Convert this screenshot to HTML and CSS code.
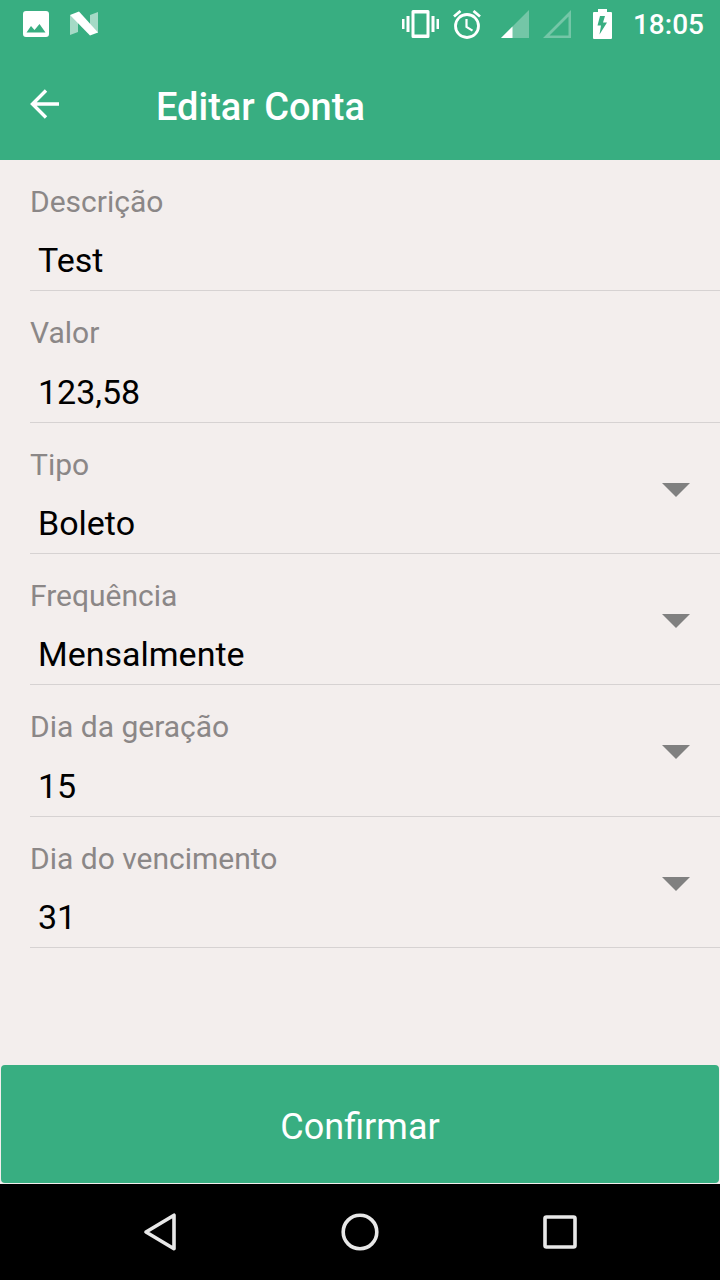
FILE: index.html
```html
<!DOCTYPE html>
<html lang="pt-BR">
<head>
<meta charset="utf-8">
<meta name="viewport" content="width=device-width, initial-scale=1">
<title>Editar Conta</title>
<link rel="stylesheet" href="styles.css">
</head>
<body>
<div class="screen">
  <div class="status-bar">
    <div class="status-group">
      <svg width="26" height="26" viewBox="0 0 26 26" aria-hidden="true"><path fill="#fff" fill-rule="evenodd" d="M3 0h20q3 0 3 3v20q0 3-3 3H3q-3 0-3-3V3Q0 0 3 0zM3.500 21.500h19l-6-8.500-5 6-3.500-4z"/></svg>
      <svg width="28" height="26" viewBox="0 0 28 26" aria-hidden="true"><path fill="#fff" fill-opacity=".55" d="M0 4v20l8-3V8zM28 1v21l-8-5V4z"/><path fill="#fff" d="M0 4l9-3.500L28 21.500l-8 3z"/></svg>
    </div>
    <div class="status-group status-right">
      <svg width="37" height="28" viewBox="0 0 37 28" aria-hidden="true"><path fill="#fff" fill-rule="evenodd" d="M0 9h2.500v10H0zM4.500 6h3v16h-3zM29.500 6h3v16h-3zM34.500 9H37v10h-2.500zM11 0h15q1.500 0 1.500 1.500v25Q27.500 28 26 28H11q-1.500 0-1.500-1.500v-25Q9.500 0 11 0zM12.500 3.500v21h12v-21z"/></svg>
      <svg width="28" height="29" viewBox="0 0 28 29" fill="none" stroke="#fff" aria-hidden="true"><circle cx="14" cy="16" r="11.500" stroke-width="2.800"/><path stroke-width="2.800" d="M1 6.500l6.500-5.500M27 6.500L20.500 1"/><path stroke-width="2.200" d="M13.500 9v8l6 3.600"/></svg>
      <svg class="signal" width="28" height="28" viewBox="0 0 28 28" aria-hidden="true"><path fill="#fff" fill-opacity=".3" d="M28 0v28H0z"/><path fill="#fff" d="M11.500 16.500V28H0z"/></svg>
      <svg width="28" height="28" viewBox="0 0 28 28" aria-hidden="true"><path fill="#fff" fill-opacity=".3" fill-rule="evenodd" d="M28 0v28H0zM25.500 6.500l-19 19h19z"/></svg>
      <svg class="battery" width="19" height="30" viewBox="0 0 19 30" aria-hidden="true"><path fill="#fff" fill-rule="evenodd" d="M5 0h9v3h4q1 0 1 1v25q0 1-1 1H1q-1 0-1-1V4q0-1 1-1h4zM12 7H7L4.500 16.500H8L6.500 25.500 14 13.500h-4z"/></svg>
      <span class="clock">18:05</span>
    </div>
  </div>
  <header class="app-bar">
    <button class="back" type="button" aria-label="Voltar"><svg width="30" height="30" viewBox="0 0 30 30" fill="none" stroke="#fff" stroke-width="3.400" aria-hidden="true"><path d="M29 15H3M16 1.500L2.500 15 16 28.500"/></svg></button>
    <h1 class="title">Editar Conta</h1>
  </header>
  <form class="content">
    <div class="fields">
      <div class="field"><label class="label" for="descricao">Descrição</label><input class="value" id="descricao" type="text" value="Test"></div>
      <div class="field"><label class="label" for="valor">Valor</label><input class="value" id="valor" type="text" value="123,58"></div>
      <div class="field"><label class="label" for="tipo">Tipo</label><select class="value" id="tipo"><option>Boleto</option></select><svg class="arrow" width="28" height="14" viewBox="0 0 28 14" aria-hidden="true"><path fill="#808080" d="M0 0h28L14 14z"/></svg></div>
      <div class="field"><label class="label" for="frequencia">Frequência</label><select class="value" id="frequencia"><option>Mensalmente</option></select><svg class="arrow" width="28" height="14" viewBox="0 0 28 14" aria-hidden="true"><path fill="#808080" d="M0 0h28L14 14z"/></svg></div>
      <div class="field"><label class="label" for="geracao">Dia da geração</label><select class="value" id="geracao"><option>15</option></select><svg class="arrow" width="28" height="14" viewBox="0 0 28 14" aria-hidden="true"><path fill="#808080" d="M0 0h28L14 14z"/></svg></div>
      <div class="field"><label class="label" for="vencimento">Dia do vencimento</label><select class="value" id="vencimento"><option>31</option></select><svg class="arrow" width="28" height="14" viewBox="0 0 28 14" aria-hidden="true"><path fill="#808080" d="M0 0h28L14 14z"/></svg></div>
    </div>
    <button class="confirm" type="submit">Confirmar</button>
  </form>
  <nav class="nav-bar">
    <button class="nav-button" type="button" aria-label="Voltar"><svg width="40" height="40" viewBox="0 0 40 40" fill="none" stroke="#e8e8e8" stroke-width="3.600" stroke-linejoin="round" aria-hidden="true"><path d="M34 3.200v33.600L6 20z"/></svg></button>
    <button class="nav-button" type="button" aria-label="Início"><svg width="40" height="40" viewBox="0 0 40 40" fill="none" stroke="#e8e8e8" stroke-width="3.600" aria-hidden="true"><circle cx="20" cy="20" r="16.800"/></svg></button>
    <button class="nav-button" type="button" aria-label="Recentes"><svg width="40" height="40" viewBox="0 0 40 40" fill="none" stroke="#e8e8e8" stroke-width="3.600" aria-hidden="true"><rect x="5" y="5" width="30" height="30" rx="1.500"/></svg></button>
  </nav>
</div>
</body>
</html>
```
FILE: styles.css
```css
* {
  box-sizing: border-box;
}

body {
  margin: 0;
  background: #f3eeed;
  font-family: Roboto, "Liberation Sans", sans-serif;
}

svg {
  display: block;
  flex: none;
}

button,
input,
select {
  margin: 0;
  padding: 0;
  border: 0;
  border-radius: 0;
  background: none;
  font-family: inherit;
  appearance: none;
}

.screen {
  display: flex;
  flex-direction: column;
  min-height: 100vh;
}

.status-bar {
  display: flex;
  align-items: center;
  justify-content: space-between;
  height: 48px;
  padding: 0 16px 0 23px;
  background: #38ae81;
}

.status-group {
  display: flex;
  align-items: center;
  gap: 21px;
}

.status-right {
  gap: 14px;
}

.signal {
  margin-left: 6px;
}

.battery {
  margin: 0 7px 0 8px;
}

.clock {
  padding-top: 2px;
  color: #fff;
  font-size: 28px;
  font-weight: 500;
  line-height: 32px;
}

.app-bar {
  display: flex;
  align-items: center;
  gap: 96px;
  height: 112px;
  padding: 0 30px;
  background: #38ae81;
}

.title {
  margin: 0;
  padding-top: 6px;
  color: #fff;
  font-size: 38px;
  font-weight: 500;
  line-height: 48px;
}

.content {
  display: flex;
  flex: 1;
  flex-direction: column;
  justify-content: space-between;
}

.fields {
  display: grid;
  grid-auto-rows: 1fr;
  min-height: 788px;
  padding-left: 30px;
}

.field {
  position: relative;
  display: flex;
  flex-direction: column;
  justify-content: space-between;
  padding: 22px 0 10px;
  border-bottom: 1px solid #d6d2d2;
}

.label {
  color: #8b8787;
  font-size: 30px;
  line-height: 40px;
}

.value {
  width: 100%;
  height: 40px;
  padding-left: 8px;
  color: #000;
  font-size: 34px;
  line-height: 40px;
}

.arrow {
  position: absolute;
  top: 60px;
  right: 30px;
  pointer-events: none;
}

.confirm {
  height: 118px;
  margin: 0 1px 1px;
  padding-top: 6px;
  border-radius: 4px;
  background: #38ae81;
  color: #fff;
  font-size: 36px;
}

.nav-bar {
  display: flex;
  justify-content: center;
  gap: 160px;
  height: 96px;
  background: #000;
}

.nav-button {
  display: flex;
  align-items: center;
}
```
